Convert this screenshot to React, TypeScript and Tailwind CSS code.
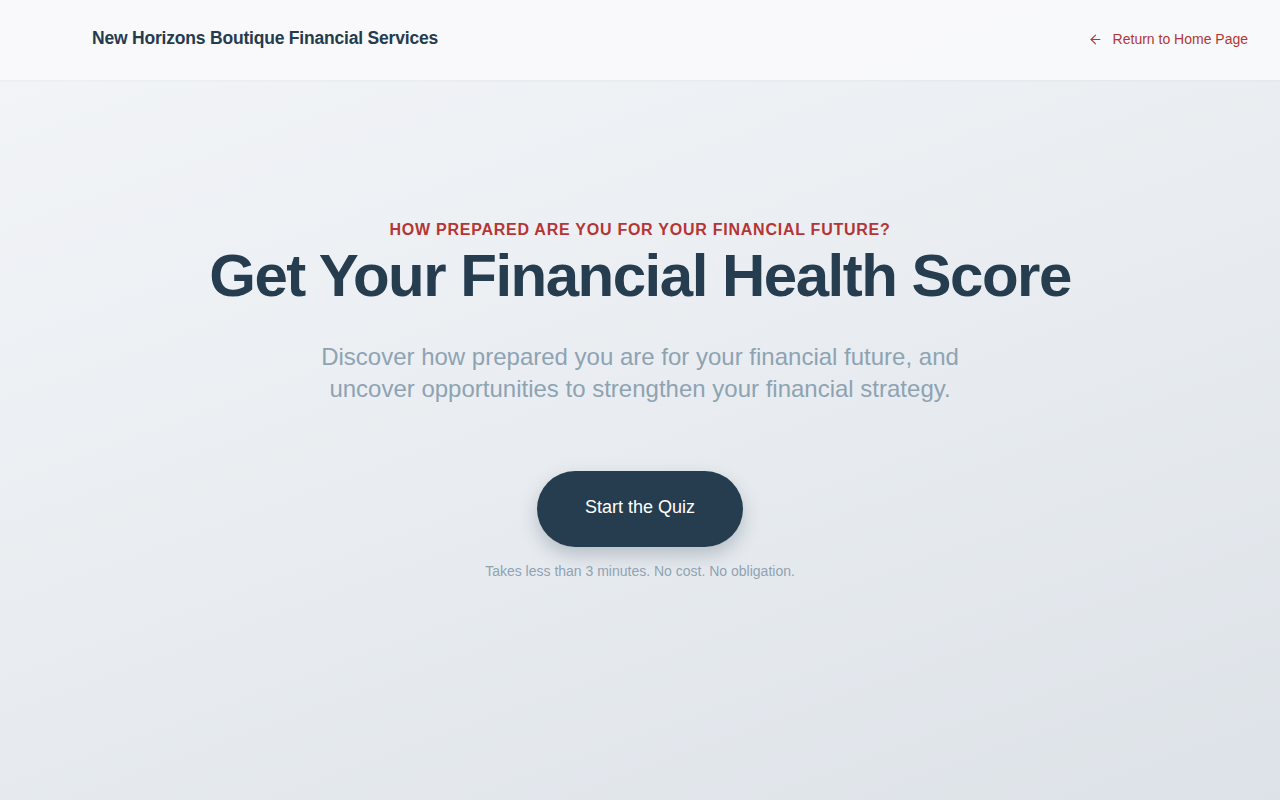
import { ArrowLeft } from 'lucide-react';

// Landing for the financial health quiz: slim header, centred hero, one CTA.
export default function App() {
  return (
    <div className="flex min-h-[800px] flex-col bg-[linear-gradient(160deg,#f3f5f8_0%,#e9edf1_50%,#dde2e8_100%)] font-['Liberation_Sans',Arial,sans-serif]">
      <header className="flex h-20 items-center justify-between bg-[#f9fafc]/90 pb-1 pl-[92px] pr-8 shadow-[0_1px_2px_rgba(30,50,70,0.04)]">
        <span className="text-[17.5px] font-bold tracking-[-0.2px] text-[#253b4e]">New Horizons Boutique Financial Services</span>
        <a href="#" className="mt-[2px] flex items-center gap-[10px] text-[14px] text-[#b53535]">
          <ArrowLeft className="h-[15px] w-[15px]" strokeWidth={1.75} />
          Return to Home Page
        </a>
      </header>

      <main className="flex flex-col items-center pt-[138px] text-center">
        <p className="text-[16px] font-bold tracking-[0.75px] text-[#b53535]">HOW PREPARED ARE YOU FOR YOUR FINANCIAL FUTURE?</p>
        <h1 className="mt-1 text-[60px] font-bold leading-none tracking-[-1.5px] text-[#263d50]">Get Your Financial Health Score</h1>
        <p className="mt-[35px] max-w-[660px] text-[24px] leading-8 text-[#8ea3b2]">
          Discover how prepared you are for your financial future, and uncover opportunities to strengthen your financial strategy.
        </p>
        <button className="mt-[66px] h-[76px] w-[206px] rounded-full bg-[#263d50] pb-1 text-[18px] text-white shadow-[0_8px_18px_rgba(38,61,80,0.25)]">
          Start the Quiz
        </button>
        <p className="mt-[14px] text-[14px] text-[#8ea3b2]">Takes less than 3 minutes. No cost. No obligation.</p>
      </main>
    </div>
  );
}
